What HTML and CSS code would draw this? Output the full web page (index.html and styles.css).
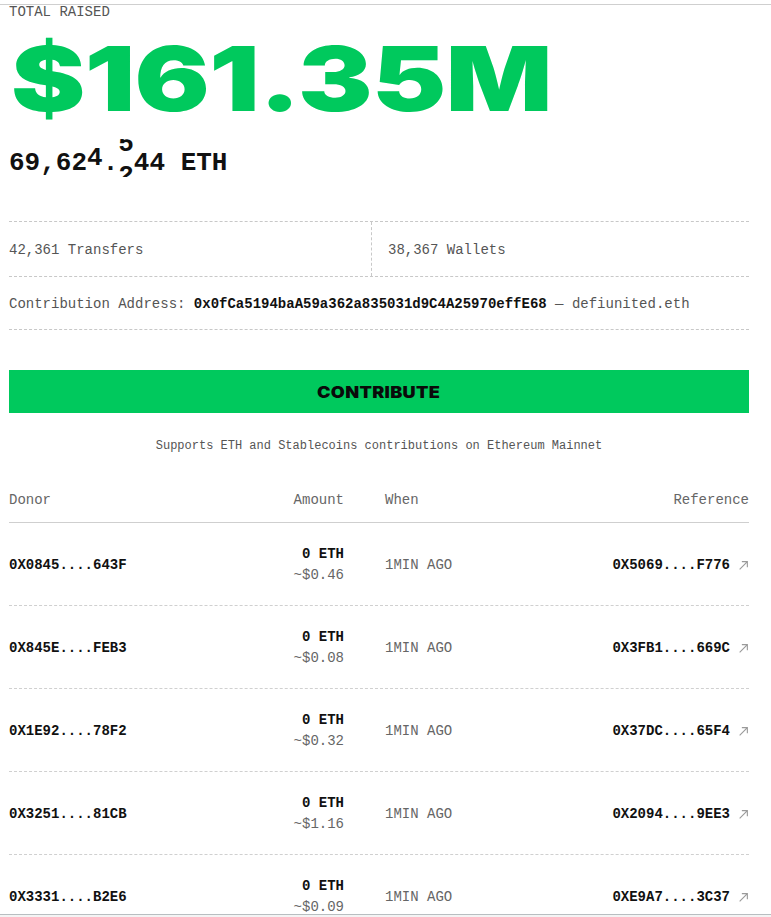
FILE: index.html
```html
<!DOCTYPE html>
<html lang="en">
<head>
<meta charset="utf-8">
<title>Total Raised</title>
<link rel="stylesheet" href="styles.css">
</head>
<body>
<div class="topbar"></div>
<main class="page">
  <div class="label">TOTAL RAISED</div>
  <div class="total"><span class="total-text">$161.35M</span></div>
  <div class="eth">69,62<span class="roll roll-a"><span class="roll-stack"><span>4</span><span>5</span></span></span>.<span class="roll roll-b"><span class="roll-stack"><span>5</span><span>2</span></span></span>44 ETH</div>

  <div class="stats">
    <div class="stat">42,361 Transfers</div>
    <div class="stat stat-right">38,367 Wallets</div>
  </div>
  <div class="address">Contribution Address: <b>0x0fCa5194baA59a362a835031d9C4A25970effE68</b> — defiunited.eth</div>

  <button class="contribute"><span class="contribute-text">CONTRIBUTE</span></button>
  <p class="note">Supports ETH and Stablecoins contributions on Ethereum Mainnet</p>

  <div class="table">
    <div class="row head">
      <div>Donor</div>
      <div class="amount">Amount</div>
      <div class="when">When</div>
      <div class="ref">Reference</div>
    </div>
    <div class="row">
      <div class="addr">0X0845....643F</div>
      <div class="amount"><div class="eth-amt">0 ETH</div><div class="usd">~$0.46</div></div>
      <div class="when">1MIN AGO</div>
      <div class="ref"><span class="addr">0X5069....F776</span><svg class="arrow" viewBox="0 0 10 10"><path d="M1.5 8.5L8.5 1.5M3.5 1.5H8.5V6.5"/></svg></div>
    </div>
    <div class="row">
      <div class="addr">0X845E....FEB3</div>
      <div class="amount"><div class="eth-amt">0 ETH</div><div class="usd">~$0.08</div></div>
      <div class="when">1MIN AGO</div>
      <div class="ref"><span class="addr">0X3FB1....669C</span><svg class="arrow" viewBox="0 0 10 10"><path d="M1.5 8.5L8.5 1.5M3.5 1.5H8.5V6.5"/></svg></div>
    </div>
    <div class="row">
      <div class="addr">0X1E92....78F2</div>
      <div class="amount"><div class="eth-amt">0 ETH</div><div class="usd">~$0.32</div></div>
      <div class="when">1MIN AGO</div>
      <div class="ref"><span class="addr">0X37DC....65F4</span><svg class="arrow" viewBox="0 0 10 10"><path d="M1.5 8.5L8.5 1.5M3.5 1.5H8.5V6.5"/></svg></div>
    </div>
    <div class="row">
      <div class="addr">0X3251....81CB</div>
      <div class="amount"><div class="eth-amt">0 ETH</div><div class="usd">~$1.16</div></div>
      <div class="when">1MIN AGO</div>
      <div class="ref"><span class="addr">0X2094....9EE3</span><svg class="arrow" viewBox="0 0 10 10"><path d="M1.5 8.5L8.5 1.5M3.5 1.5H8.5V6.5"/></svg></div>
    </div>
    <div class="row">
      <div class="addr">0X3331....B2E6</div>
      <div class="amount"><div class="eth-amt">0 ETH</div><div class="usd">~$0.09</div></div>
      <div class="when">1MIN AGO</div>
      <div class="ref"><span class="addr">0XE9A7....3C37</span><svg class="arrow" viewBox="0 0 10 10"><path d="M1.5 8.5L8.5 1.5M3.5 1.5H8.5V6.5"/></svg></div>
    </div>
    <div class="row">
      <div class="addr">0X71AC....D04E</div>
      <div class="amount"><div class="eth-amt">0 ETH</div><div class="usd">~$0.21</div></div>
      <div class="when">2MIN AGO</div>
      <div class="ref"><span class="addr">0X9B3D....1A7F</span><svg class="arrow" viewBox="0 0 10 10"><path d="M1.5 8.5L8.5 1.5M3.5 1.5H8.5V6.5"/></svg></div>
    </div>
  </div>
</main>
<div class="bottombar"></div>
</body>
</html>
```
FILE: styles.css
```css
* { box-sizing: border-box; }
html, body { margin: 0; padding: 0; background: #fff; }
body {
  font-family: "Liberation Mono", "DejaVu Sans Mono", monospace;
  font-size: 14px;
  color: #111;
}
.topbar {
  height: 5px;
  border-bottom: 1px solid #cfcfcf;
}
.page {
  width: 749px;
  padding-left: 9px;
}
.label {
  font-size: 14px;
  line-height: 16px;
  color: #555;
  margin-top: -1px;
}
.total {
  font-family: Inter, "Liberation Sans", sans-serif;
  font-weight: 900;
  font-size: 90px;
  line-height: 96px;
  color: #00c95d;
  margin-top: 11px;
  padding-left: 2px;
  white-space: nowrap;
}
.total-text {
  display: inline-block;
  transform: scaleX(1.24);
  transform-origin: 0 50%;
  letter-spacing: -0.5px;
}
.eth {
  font-weight: 700;
  font-size: 26px;
  line-height: 38px;
  margin-top: 17px;
  white-space: nowrap;
}
.roll {
  display: inline-block;
  height: 38px;
  margin-top: -5px;
  margin-bottom: 5px;
  overflow: hidden;
  vertical-align: top;
}
.roll-stack {
  display: flex;
  flex-direction: column;
  padding-top: 8px;
}
.roll-stack span { line-height: 32px; height: 32px; }
.roll-a .roll-stack { transform: translateY(-5px); }
.roll-b .roll-stack { transform: translateY(-19px); }
.stats {
  margin-top: 39px;
  display: grid;
  grid-template-columns: 362px 1fr;
  border-top: 1px dashed #c8c8c8;
  border-bottom: 1px dashed #c8c8c8;
  color: #555;
  line-height: 16px;
}
.stat { padding: 20px 0 18px; }
.stat-right {
  border-left: 1px dashed #c8c8c8;
  padding-left: 16px;
}
.address {
  color: #555;
  line-height: 16px;
  padding: 19px 0 17px;
  border-bottom: 1px dashed #c8c8c8;
  white-space: nowrap;
}
.address b { color: #111; font-weight: 700; }
.contribute {
  display: block;
  width: 100%;
  height: 43px;
  margin-top: 40px;
  border: 0;
  background: #00c95d;
  font-family: Inter, "Liberation Sans", sans-serif;
  font-weight: 900;
  font-size: 16px;
  color: #0a0a0a;
  padding: 0;
}
.contribute-text {
  display: inline-block;
  transform: scaleX(1.13);
  letter-spacing: 0.3px;
}
.note {
  margin: 25px 0 0;
  text-align: center;
  font-size: 12px;
  line-height: 16px;
  color: #555;
}
.table { margin-top: 38px; }
.row {
  display: grid;
  grid-template-columns: 200px 135px 1fr 1fr;
  align-items: center;
  padding: 21px 0 19px;
  border-bottom: 1px dashed #d0d0d0;
  line-height: 21px;
}
.row.head {
  color: #666;
  padding: 0 0 14px;
  line-height: 16px;
  border-bottom: 1px solid #cfcfcf;
}
.amount { text-align: right; }
.when { padding-left: 41px; color: #666; }
.ref {
  display: flex;
  justify-content: flex-end;
  align-items: center;
  gap: 8px;
}
.addr { font-weight: 700; color: #111; }
.eth-amt { font-weight: 700; }
.usd { color: #666; }
.arrow {
  width: 11px;
  height: 11px;
  fill: none;
  stroke: #9a9a9a;
  stroke-width: 1;
}
.bottombar {
  position: fixed;
  left: 0;
  right: 0;
  bottom: 0;
  height: 3px;
  border-top: 1px solid #b8bec1;
  background: #f4f4f4;
}
```
